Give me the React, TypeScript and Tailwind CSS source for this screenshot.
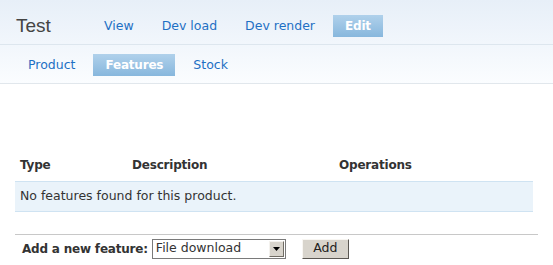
import React from 'react'

const primaryTabs = ['View', 'Dev load', 'Dev render', 'Edit']
const secondaryTabs = ['Product', 'Features', 'Stock']

const Tab = ({ label, active }: { label: string; active?: boolean }) =>
  active ? (
    <span className="h-[22px] px-[12px] mx-[4px] flex items-center font-bold text-[12px] tracking-[-0.2px] text-white bg-gradient-to-b from-[#b0d1eb] to-[#87b7dd]">
      {label}
    </span>
  ) : (
    <a href="#" className="h-[22px] px-[14px] flex items-center text-[#1e70c4]">
      {label}
    </a>
  )

const App = () => {
  return (
    <div className="w-[553px] h-[265px] bg-white text-[12.5px] text-[#333] font-['DejaVu_Sans',sans-serif] overflow-hidden">
      <div className="bg-gradient-to-b from-[#e7eff8] to-[#fbfdff]">
        <div className="h-[45px] flex items-start pt-[15px] border-b border-[#dde6ee] pl-4">
          <h1 className="h-[22px] flex items-center font-['Liberation_Sans',sans-serif] text-[19px] text-[#444] w-[74px]">Test</h1>
          <nav className="flex items-center">
            {primaryTabs.map((t) => (
              <Tab key={t} label={t} active={t === 'Edit'} />
            ))}
          </nav>
        </div>
        <div className="h-[39px] flex items-start pt-[9px] border-b border-[#e1e7ec] pl-[14px]">
          {secondaryTabs.map((t) => (
            <Tab key={t} label={t} active={t === 'Features'} />
          ))}
        </div>
      </div>

      <div className="px-[15px] pt-[66px]">
        <table className="w-[518px] border-collapse text-left">
          <thead>
            <tr className="h-[31px] text-[12px] tracking-[-0.2px]">
              <th className="pl-[5px] w-[117px] font-bold">Type</th>
              <th className="w-[207px] font-bold">Description</th>
              <th className="font-bold">Operations</th>
            </tr>
          </thead>
          <tbody>
            <tr className="h-[30px] bg-[#eaf3fa] border-y border-[#cfe3f2]">
              <td colSpan={3} className="pl-[5px]">No features found for this product.</td>
            </tr>
          </tbody>
        </table>

        <div className="mt-[22px] border-t border-[#c8c8c8] pt-[3px] flex items-center h-[26px] pl-[7px]">
          <label className="font-bold text-[12px] tracking-[-0.2px] mr-[4px]">Add a new feature:</label>
          <div className="w-[134px] h-[20px] border border-[#7a7a7a] flex items-center justify-between bg-white">
            <span className="pl-[3px] leading-none">File download</span>
            <span className="w-[15px] h-[16px] mr-[1px] bg-[#d8d4cc] border border-[#f4f2ee] border-r-[#706c64] border-b-[#706c64] flex items-center justify-center">
              <svg width="7" height="4" viewBox="0 0 7 4"><path d="M0 0h7L3.5 4z" fill="#000" /></svg>
            </span>
          </div>
          <button className="ml-[16px] w-[47px] h-[20px] bg-[#d8d4cc] border border-[#f8f6f2] border-r-[#5a5752] border-b-[#5a5752] flex items-center justify-center text-[#222]">
            Add
          </button>
        </div>
      </div>
    </div>
  )
}

export default App
